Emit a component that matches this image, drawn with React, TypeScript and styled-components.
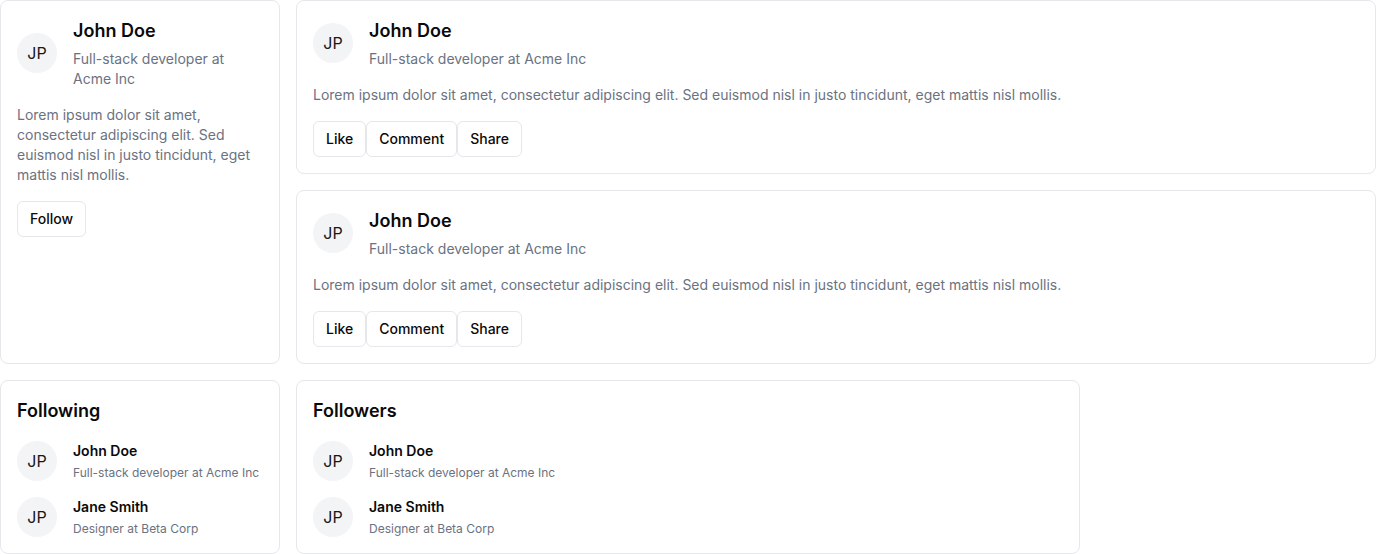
import React from "react";
import styled, { createGlobalStyle } from "styled-components";

const Global = createGlobalStyle`
  * { box-sizing: border-box; }
  body { margin: 0; background: #fff; font-family: Inter, "Noto Sans", sans-serif; color: #0a0a0a; }
`;

const Page = styled.div`
  display: grid;
  grid-template-columns: 280px 1fr 280px;
  gap: 16px;
  width: 1376px;
`;

const Card = styled.div<{ $span?: string }>`
  border: 1px solid #e5e7eb;
  border-radius: 8px;
  background: #fff;
  padding: 16px;
  ${(p) => (p.$span ? `grid-column: ${p.$span};` : "")}
`;

const PostsColumn = styled.div`
  grid-column: 2 / 4;
  display: flex;
  flex-direction: column;
  gap: 16px;
`;

const Header = styled.div`
  display: flex;
  align-items: center;
  gap: 16px;
`;

const Avatar = styled.div`
  width: 40px;
  height: 40px;
  flex: none;
  border-radius: 50%;
  background: #f3f4f6;
  display: flex;
  align-items: center;
  justify-content: center;
  font-size: 16px;
  color: #171717;
`;

const Name = styled.div`
  font-size: 18px;
  line-height: 28px;
  font-weight: 600;
`;

const Role = styled.div`
  font-size: 14px;
  line-height: 20px;
  color: #6b7280;
  margin-top: 4px;
`;

const Body = styled.p`
  margin: 16px 0 0;
  font-size: 14px;
  line-height: 20px;
  color: #6b7280;
`;

const Actions = styled.div`
  display: flex;
  margin-top: 16px;
`;

const Button = styled.button`
  display: inline-flex;
  align-items: center;
  height: 36px;
  padding: 0 12px 1px;
  border: 1px solid #e5e7eb;
  border-radius: 6px;
  background: #fff;
  font-family: inherit;
  font-size: 14px;
  line-height: 20px;
  font-weight: 500;
  color: #0a0a0a;
`;

const Title = styled.h2`
  margin: 0;
  font-size: 18px;
  line-height: 28px;
  font-weight: 600;
`;

const List = styled.div`
  display: flex;
  flex-direction: column;
  gap: 16px;
  margin-top: 16px;
`;

const ItemName = styled.div`
  font-size: 14px;
  line-height: 20px;
  font-weight: 600;
`;

const ItemRole = styled.div`
  font-size: 12px;
  line-height: 16px;
  color: #6b7280;
  margin-top: 4px;
`;

const lorem =
  "Lorem ipsum dolor sit amet, consectetur adipiscing elit. Sed euismod nisl in justo tincidunt, eget mattis nisl mollis.";

const people = [
  { name: "John Doe", role: "Full-stack developer at Acme Inc" },
  { name: "Jane Smith", role: "Designer at Beta Corp" },
];

function Post() {
  return (
    <Card>
      <Header>
        <Avatar>JP</Avatar>
        <div>
          <Name>John Doe</Name>
          <Role>Full-stack developer at Acme Inc</Role>
        </div>
      </Header>
      <Body>{lorem}</Body>
      <Actions>
        <Button>Like</Button>
        <Button>Comment</Button>
        <Button>Share</Button>
      </Actions>
    </Card>
  );
}

function PeopleCard({ title, span }: { title: string; span?: string }) {
  return (
    <Card $span={span}>
      <Title>{title}</Title>
      <List>
        {people.map((p) => (
          <Header key={p.name}>
            <Avatar>JP</Avatar>
            <div>
              <ItemName>{p.name}</ItemName>
              <ItemRole>{p.role}</ItemRole>
            </div>
          </Header>
        ))}
      </List>
    </Card>
  );
}

export default function App() {
  return (
    <>
      <Global />
      <Page>
        <Card>
          <Header>
            <Avatar>JP</Avatar>
            <div>
              <Name>John Doe</Name>
              <Role>Full-stack developer at Acme Inc</Role>
            </div>
          </Header>
          <Body>{lorem}</Body>
          <Actions>
            <Button>Follow</Button>
          </Actions>
        </Card>
        <PostsColumn>
          <Post />
          <Post />
        </PostsColumn>
        <PeopleCard title="Following" />
        <PeopleCard title="Followers" span="2" />
      </Page>
    </>
  );
}
